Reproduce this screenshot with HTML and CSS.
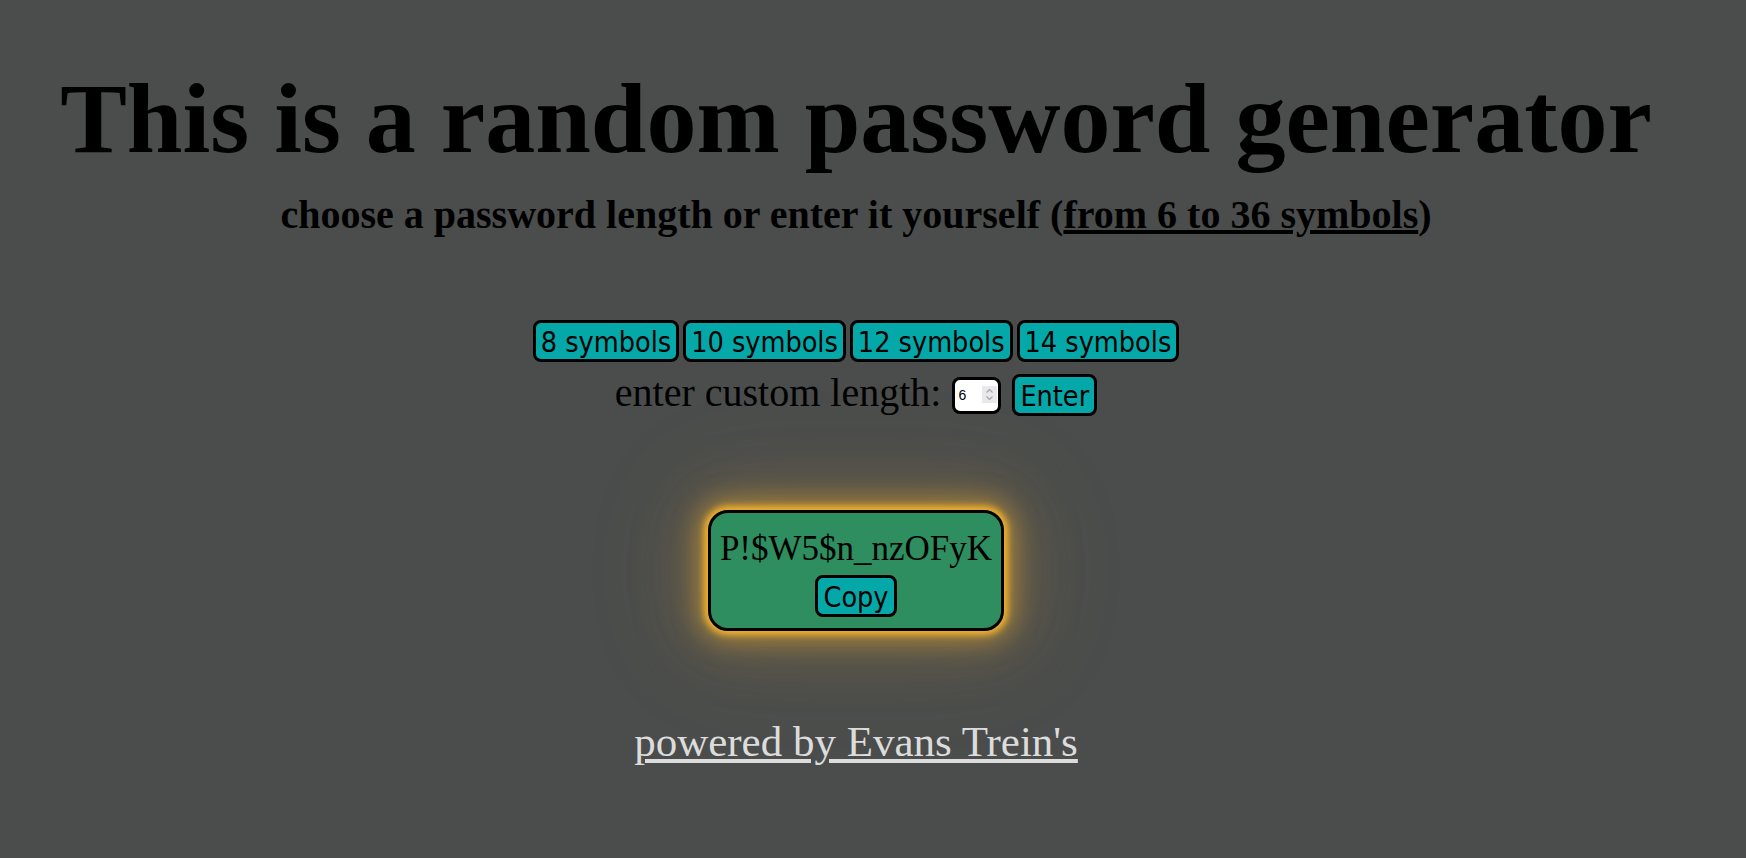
FILE: index.html
```html
<!DOCTYPE html>
<html lang="en">
<head>
<meta charset="utf-8">
<title>Random password generator</title>
<link rel="stylesheet" href="styles.css">
</head>
<body>
<main class="page">
  <h1 class="title">This is a random password generator</h1>
  <h2 class="subtitle">choose a password length or enter it yourself (<span class="range">from 6 to 36 symbols</span>)</h2>

  <div class="presets">
    <button class="btn">8 symbols</button>
    <button class="btn">10 symbols</button>
    <button class="btn">12 symbols</button>
    <button class="btn">14 symbols</button>
  </div>

  <div class="custom">
    <label class="custom-label" for="len">enter custom length:</label>
    <span class="num-wrap">
      <input class="num" id="len" type="number" value="6" min="6" max="36">
      <svg class="spin" width="15" height="17" viewBox="0 0 15 17" aria-hidden="true">
        <rect x="0" y="0" width="15" height="17" fill="#e9e9ed"/>
        <path d="M4.5 6.5 L7.5 3.5 L10.5 6.5" fill="none" stroke="#a3a3a8" stroke-width="1.2"/>
        <path d="M4.5 10.5 L7.5 13.5 L10.5 10.5" fill="none" stroke="#a3a3a8" stroke-width="1.2"/>
      </svg>
    </span>
    <button class="btn">Enter</button>
  </div>

  <div class="result-wrap">
    <div class="result">
      <div class="password">P!$W5$n_nzOFyK</div>
      <button class="btn">Copy</button>
    </div>
  </div>

  <footer class="footer">
    <a class="credit" href="#">powered by Evans Trein's</a>
  </footer>
</main>
</body>
</html>
```

FILE: styles.css
```css
html, body {
  margin: 0;
  padding: 0;
  background: #4b4d4c;
}

body {
  font-family: "Liberation Serif", "Times New Roman", serif;
  color: #000;
  height: 858px;
  overflow: hidden;
}

.page {
  padding-right: 34px;
  text-align: center;
  display: flex;
  flex-direction: column;
  align-items: center;
}

.title {
  margin: 61px 0 0;
  font-size: 100px;
  line-height: 115px;
  font-weight: bold;
  white-space: nowrap;
}

.subtitle {
  margin: 16px 0 0;
  font-size: 40px;
  line-height: 46px;
  font-weight: bold;
  white-space: nowrap;
}

.range {
  text-decoration: underline;
}

.btn {
  font-family: "DejaVu Sans Condensed", "DejaVu Sans", sans-serif;
  font-stretch: condensed;
  font-size: 28.5px;
  line-height: 33px;
  color: #000;
  background: #05a8a8;
  border: 3px solid #000;
  border-radius: 8px;
  padding: 3px 5px 0;
  margin: 0;
}

.presets {
  margin-top: 82px;
  display: flex;
  gap: 4px;
}

.custom {
  margin-top: 8px;
  display: flex;
  align-items: baseline;
}

.custom-label {
  font-size: 40px;
  line-height: 46px;
  margin-right: 11px;
}

.num-wrap {
  position: relative;
  display: inline-block;
  margin-right: 11px;
  align-self: center;
  top: 2px;
}

.num {
  box-sizing: border-box;
  width: 49px;
  height: 37px;
  border: 3px solid #000;
  border-radius: 8px;
  background: #fff;
  color: #000;
  font-family: "Liberation Sans", Arial, sans-serif;
  font-size: 14px;
  padding: 0 0 0 3px;
  display: block;
}

.num::-webkit-inner-spin-button,
.num::-webkit-outer-spin-button {
  -webkit-appearance: none;
  margin: 0;
}

.spin {
  position: absolute;
  right: 4px;
  top: 9px;
}

.result-wrap {
  margin-top: 94px;
}

.result {
  box-sizing: border-box;
  width: 296px;
  height: 121px;
  background: #2e8e5f;
  border: 3px solid #000;
  border-radius: 20px;
  padding: 16px 0 0;
  display: flex;
  flex-direction: column;
  align-items: center;
  gap: 6px;
  box-shadow:
    0 0 6px 4px #f0b030,
    0 0 24px 10px rgba(228, 168, 50, 0.5),
    0 0 60px 18px rgba(190, 145, 60, 0.3),
    0 0 100px 30px rgba(150, 125, 75, 0.12);
}

.password {
  font-size: 35px;
  line-height: 40px;
  white-space: nowrap;
}

.footer {
  margin-top: 86px;
}

.credit {
  font-size: 43px;
  line-height: 49px;
  color: #dcdcdc;
  text-decoration: underline;
}
```
